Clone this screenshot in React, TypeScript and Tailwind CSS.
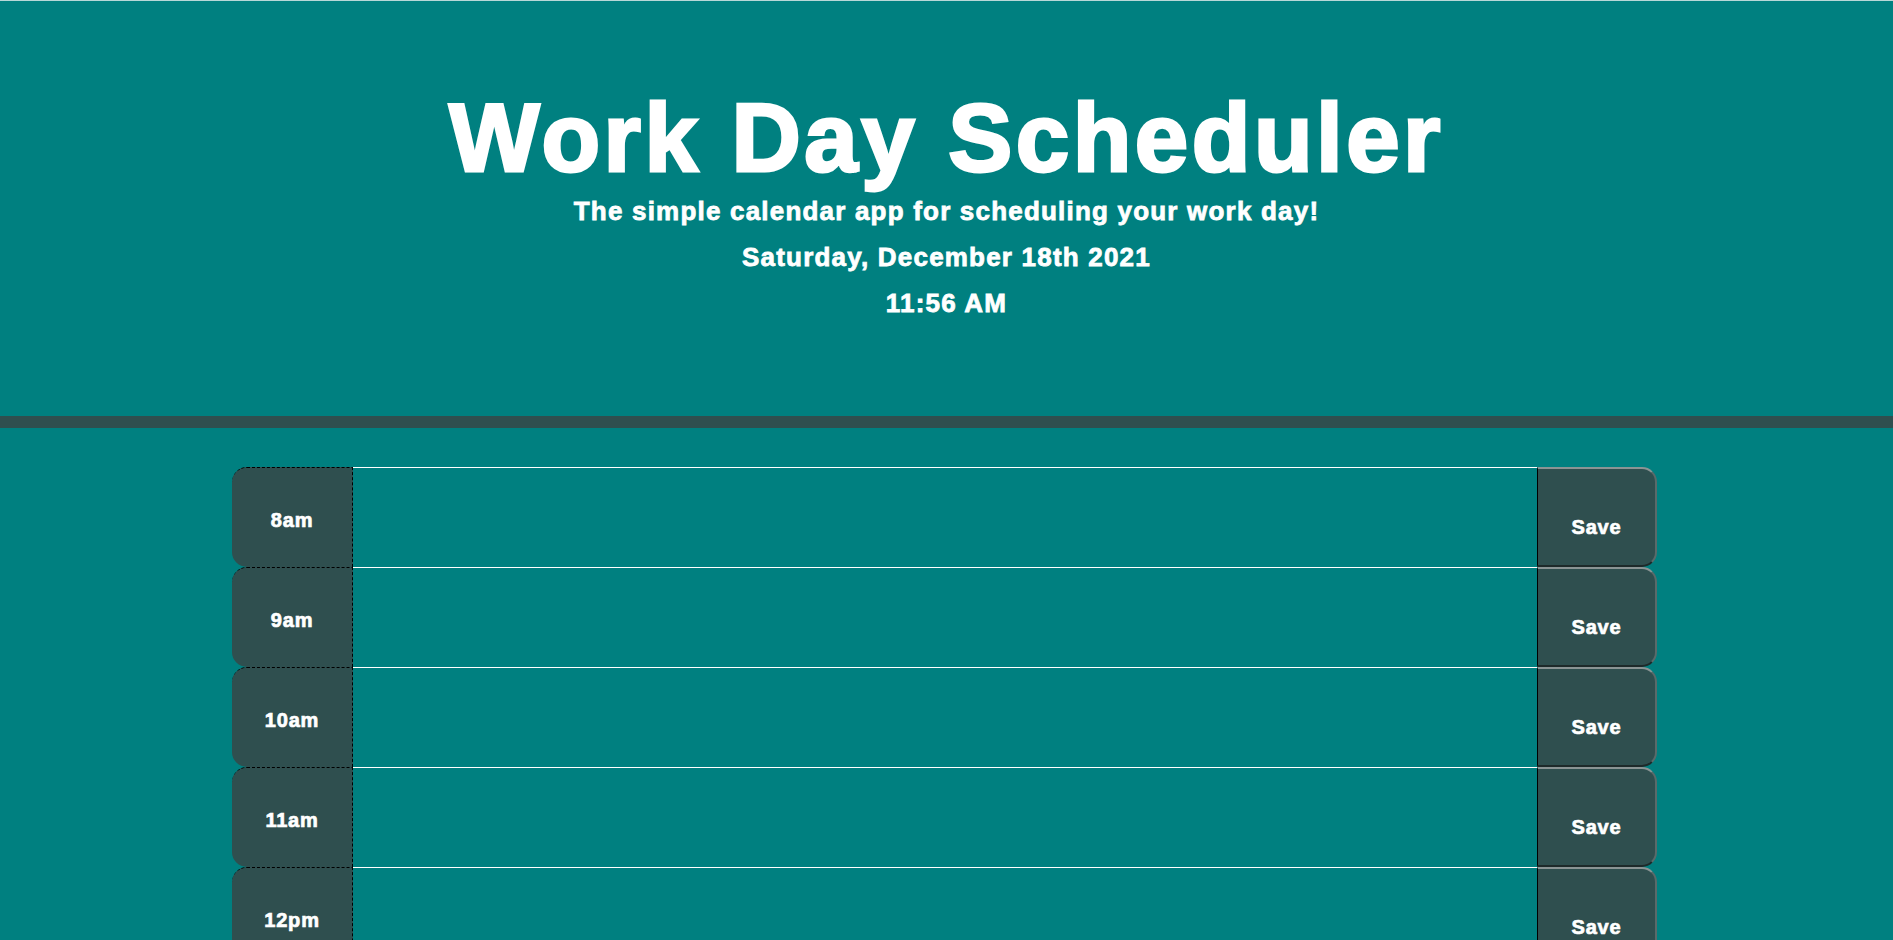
import React from 'react';

const hours = ['8am', '9am', '10am', '11am', '12pm', '1pm', '2pm', '3pm', '4pm', '5pm'];

const TimeBlock: React.FC<{ hour: string }> = ({ hour }) => (
    <div className="flex h-[100px]">
        <div className="w-[121px] shrink-0 flex items-center justify-center pt-[4px] bg-[#2f4f4f] rounded-l-[15px] border-t border-dashed border-t-black border-r border-r-black text-white text-[20px] font-bold tracking-[0.8px] [-webkit-text-stroke:0.7px_white]">
            {hour}
        </div>
        <textarea className="flex-1 bg-[#008080] border-t border-white resize-none outline-none text-white p-2" />
        <button className="w-[120px] shrink-0 flex items-center justify-center pt-5 bg-[#2f4f4f] rounded-r-[15px] border-l border-l-black border-t-2 border-t-[#8a9494] border-r-2 border-r-[#5a6a6a] border-b-2 border-b-[#1e2a2a] text-white text-[20px] font-bold tracking-[0.8px] [-webkit-text-stroke:0.7px_white]">
            Save
        </button>
    </div>
);

export default function App() {
    return (
        <div className="min-h-screen bg-[#008080] text-white font-['Liberation_Sans',Arial,sans-serif]">
            {/* Header */}
            <header className="h-[428px] border-t border-t-[#b8d8d8] border-b-[12px] border-b-[#2f4f4f] flex flex-col items-center pt-[89px]">
                <h1 className="text-[96px] leading-none font-bold tracking-[3.5px] [-webkit-text-stroke:3px_white]">Work Day Scheduler</h1>
                <p className="mt-[6px] text-[26px] leading-[39px] font-bold tracking-[1.2px] [-webkit-text-stroke:0.8px_white]">The simple calendar app for scheduling your work day!</p>
                <p className="mt-[7px] text-[26px] leading-[39px] font-bold tracking-[1.2px] [-webkit-text-stroke:0.8px_white]">Saturday, December 18th 2021</p>
                <p className="mt-[7px] text-[26px] leading-[39px] font-bold tracking-[1.2px] [-webkit-text-stroke:0.8px_white]">11:56 AM</p>
            </header>

            {/* Time blocks */}
            <div className="w-[1429px] mx-auto pr-[4px] mt-[39px] pb-10">
                {hours.map((h) => (
                    <TimeBlock key={h} hour={h} />
                ))}
            </div>
        </div>
    );
}
